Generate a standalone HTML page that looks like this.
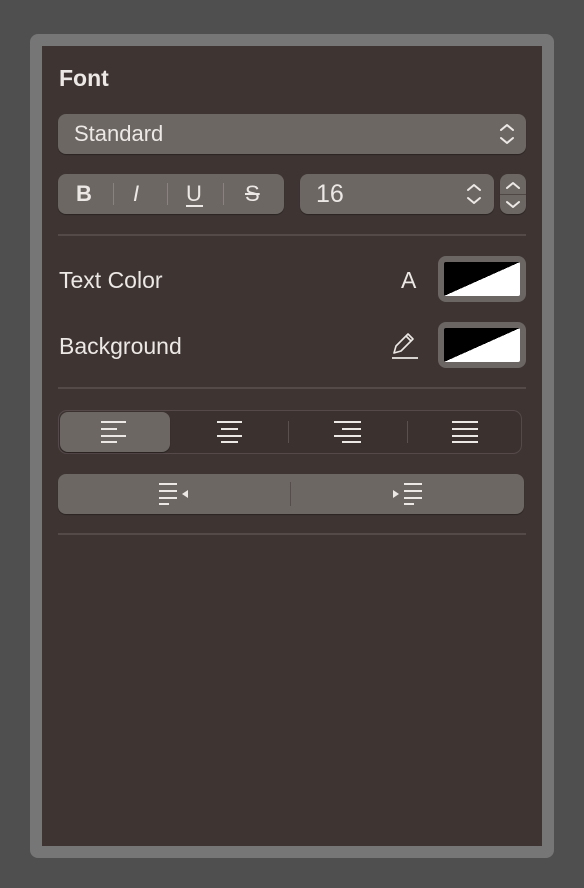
<!DOCTYPE html>
<html><head><style>
*{margin:0;padding:0;box-sizing:border-box}
body{width:584px;height:888px;background:#4f4f4f;font-family:"Liberation Sans",sans-serif;color:#ece8e6;position:relative;overflow:hidden}
.a{position:absolute}
.frame{left:30px;top:34px;width:524px;height:824px;background:#767676;border-radius:8px}
.panel{left:42px;top:46px;width:500px;height:800px;background:#3e3533}
.btn{background:#6d6764;border-radius:8px;box-shadow:0 1px 1px rgba(0,0,0,.35)}
.sep{left:58px;width:468px;height:2px;background:#544b49}
.lbl{font-size:23px}
.sw{width:88px;height:46px;background:#6b6564;border-radius:8px;padding:6px}
.sw div{width:100%;height:100%;background:linear-gradient(to top left,#fff 50%,#000 50%);border-radius:2px}
.vd{width:1px;background:#8a8280}
</style></head><body>
<div class="a frame"></div>
<div class="a panel"></div>
<div class="a" style="left:59px;top:65px;font-size:23px;font-weight:bold">Font</div>
<div class="a btn" style="left:58px;top:114px;width:468px;height:40px"></div>
<div class="a lbl" style="left:74px;top:121px;font-size:22px">Standard</div>
<svg class="a" style="left:499px;top:122px" width="16" height="24" viewBox="0 0 16 24"><path d="M2 8l6-5 6 5M2 16l6 5 6-5" stroke="#ece8e6" stroke-width="2" fill="none" stroke-linecap="round" stroke-linejoin="round"/></svg>
<div class="a btn" style="left:58px;top:174px;width:226px;height:40px"></div>
<div class="a" style="left:76px;top:181px;font-size:22px;font-weight:bold">B</div>
<div class="a vd" style="left:113px;top:183px;height:22px"></div>
<div class="a" style="left:133px;top:181px;font-size:22px;font-style:italic">I</div>
<div class="a vd" style="left:167px;top:183px;height:22px"></div>
<div class="a" style="left:186px;top:181px;font-size:22px">U</div>
<div class="a" style="left:186px;top:205px;width:17px;height:2px;background:#ece8e6"></div>
<div class="a vd" style="left:223px;top:183px;height:22px"></div>
<div class="a" style="left:245px;top:181px;font-size:22px;text-decoration:line-through">S</div>
<div class="a btn" style="left:300px;top:174px;width:194px;height:40px"></div>
<div class="a" style="left:316px;top:180px;font-size:25px">16</div>
<svg class="a" style="left:466px;top:182px" width="16" height="24" viewBox="0 0 16 24"><path d="M2 8l6-5 6 5M2 16l6 5 6-5" stroke="#ece8e6" stroke-width="2" fill="none" stroke-linecap="round" stroke-linejoin="round"/></svg>
<div class="a btn" style="left:500px;top:174px;width:26px;height:40px"></div>
<div class="a" style="left:500px;top:194px;width:26px;height:1px;background:#4f4744"></div>
<svg class="a" style="left:505px;top:178px" width="16" height="34" viewBox="0 0 16 34"><path d="M2 10l6-5 6 5M2 24l6 5 6-5" stroke="#ece8e6" stroke-width="2" fill="none" stroke-linecap="round" stroke-linejoin="round"/></svg>
<div class="a sep" style="top:234px"></div>
<div class="a lbl" style="left:59px;top:267px">Text Color</div>
<div class="a" style="left:401px;top:267px;font-size:23px">A</div>
<div class="a sw" style="left:438px;top:256px"><div></div></div>
<div class="a lbl" style="left:59px;top:333px">Background</div>
<svg class="a" style="left:390px;top:331px" width="30" height="30" viewBox="0 0 30 30"><path d="M4 22l2-7L18 3l5 5L11 20z M16 5l5 5" stroke="#ece8e6" stroke-width="1.6" fill="none" stroke-linejoin="round"/><path d="M2 27h26" stroke="#ece8e6" stroke-width="1.8"/></svg>
<div class="a sw" style="left:438px;top:322px"><div></div></div>
<div class="a sep" style="top:387px"></div>
<div class="a" style="left:58px;top:410px;width:464px;height:44px;border:1px solid #55494a;border-radius:9px;background:#3b3230"></div>
<div class="a btn" style="left:60px;top:412px;width:110px;height:40px"></div>
<svg class="a" style="left:100px;top:420px" width="240" height="24" viewBox="0 0 240 24">
<g stroke="#ece8e6" stroke-width="2">
<path d="M1 2h25M1 9h16M1 16h25M1 22h16"/>
<path d="M117 2h25M121 9h17M117 16h25M121 22h17"/>
</g></svg>
<svg class="a" style="left:330px;top:420px" width="150" height="24" viewBox="0 0 150 24"><g stroke="#ece8e6" stroke-width="2"><path d="M4 2h27M12 9h19M4 16h27M12 22h19"/><path d="M122 2h26M122 9h26M122 16h26M122 22h26"/></g></svg>
<div class="a vd" style="left:288px;top:421px;height:22px;background:#5a504e"></div>
<div class="a vd" style="left:407px;top:421px;height:22px;background:#5a504e"></div>
<div class="a btn" style="left:58px;top:474px;width:466px;height:40px"></div>
<div class="a vd" style="left:290px;top:482px;height:24px;background:#554d4b"></div>
<svg class="a" style="left:158px;top:482px" width="32" height="24" viewBox="0 0 32 24"><g stroke="#ece8e6" stroke-width="2"><path d="M1 2h18M1 9h18M1 16h18M1 22h10"/></g><path d="M30 8v8l-6-4z" fill="#ece8e6"/></svg>
<svg class="a" style="left:392px;top:482px" width="32" height="24" viewBox="0 0 32 24"><g stroke="#ece8e6" stroke-width="2"><path d="M12 2h18M12 9h18M12 16h18M12 22h10"/></g><path d="M1 8v8l6-4z" fill="#ece8e6"/></svg>
<div class="a sep" style="top:533px"></div>
</body></html>
